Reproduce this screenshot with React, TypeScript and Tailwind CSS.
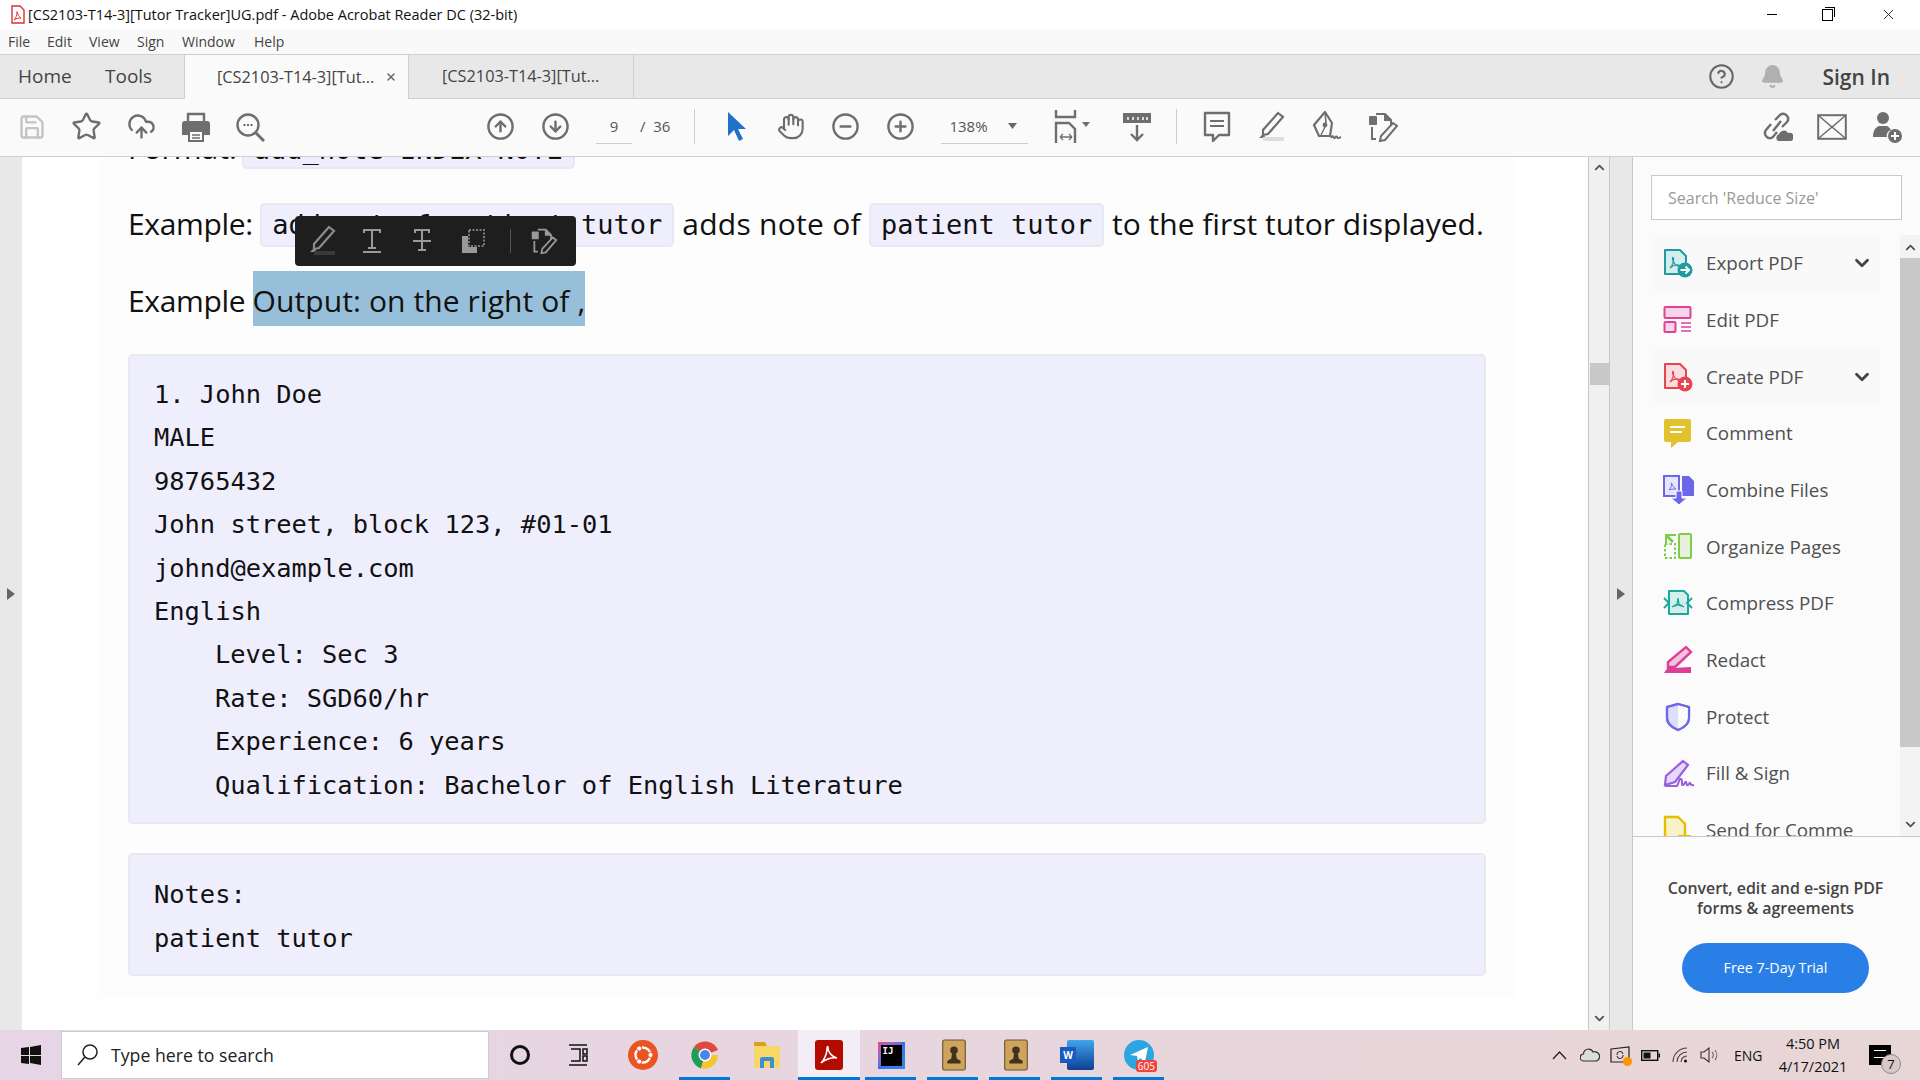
import {
  Bell,
  ChevronDown,
  ChevronUp,
  CircleArrowDown,
  CircleArrowUp,
  CircleHelp,
  CircleMinus,
  CirclePlus,
  CloudUpload,
  Hand,
  Save,
  Star,
  X,
} from "lucide-react";
import type { ReactNode } from "react";

const sans = "font-['Open_Sans','Noto_Sans',sans-serif]";
const mono = "font-['DejaVu_Sans_Mono',monospace]";

// little acrobat swirl used inside the pdf icons
function Swirl({ color }: { color: string }) {
  return (
    <path
      d="M7 20c2-2 3.500-6 3.500-9 0-2-.5-2-1-1-.4 1 1 4 2.500 6 1 1.500 3 2.500 4 2 .8-.5-1-1.500-3-1.200-2 .3-5 2-6 3.200z"
      fill="none"
      stroke={color}
      strokeWidth="1.200"
    />
  );
}

function PdfIcon({ color, fill, badge }: { color: string; fill: string; badge: "arrow" | "plus" }) {
  return (
    <svg width="30" height="30" viewBox="0 0 30 30">
      <path d="M2 2h15l6 6v18H2z" fill={fill} stroke={color} strokeWidth="2" strokeLinejoin="round" />
      <Swirl color={color} />
      <circle cx="22" cy="22" r="7.500" fill={color} />
      {badge === "arrow" ? (
        <path d="M17.500 22h8M22.500 18.500l3.500 3.500-3.500 3.500" stroke="#fff" strokeWidth="2" fill="none" />
      ) : (
        <path d="M18 22h8M22 18v8" stroke="#fff" strokeWidth="2.200" fill="none" />
      )}
    </svg>
  );
}

function EditIcon() {
  return (
    <svg width="30" height="30" viewBox="0 0 30 30">
      <rect x="1.500" y="2" width="26" height="11" rx="1" fill="#f6d5e8" stroke="#e0409a" strokeWidth="2" />
      <rect x="1.500" y="17" width="11" height="10" rx="1" fill="#f6d5e8" stroke="#e0409a" strokeWidth="2" />
      <path d="M18 18h10M18 22h10M18 26h10" stroke="#e0409a" strokeWidth="1.500" />
    </svg>
  );
}

function CommentIcon() {
  return (
    <svg width="30" height="30" viewBox="0 0 30 30">
      <path d="M3 1h23a2 2 0 0 1 2 2v19a2 2 0 0 1-2 2H15l-7 6v-6H3a2 2 0 0 1-2-2V3a2 2 0 0 1 2-2z" fill="#e2c22c" />
      <path d="M7 9h15M7 14h12" stroke="#fff" strokeWidth="2.200" />
    </svg>
  );
}

function CombineIcon() {
  return (
    <svg width="32" height="32" viewBox="0 0 32 32">
      <path d="M1 2h15v20H1z" fill="#e6e6fb" stroke="#6a68e8" strokeWidth="2" />
      <path d="M19 2h7l5 5v15H19z" fill="#6a68e8" />
      <path d="M6 16c2-2 3-5 2.500-7-.5-1 2 5 4.500 6-2 0-5 0-7 1z" fill="none" stroke="#6a68e8" />
      <path d="M13 17h6v7h5l-8 7-8-7h5z" fill="#6a68e8" stroke="#fff" />
    </svg>
  );
}

function OrganizeIcon() {
  return (
    <svg width="30" height="30" viewBox="0 0 30 30">
      <rect x="16" y="2" width="12" height="24" rx="1" fill="#e6f2dc" stroke="#7fcb4a" strokeWidth="2" />
      <rect x="2" y="12" width="10" height="14" fill="none" stroke="#7fcb4a" strokeWidth="2" strokeDasharray="2.500 2" />
      <path d="M13 2v2H6l5 5-2 2-5-5v6H2V2z" fill="#7fcb4a" />
    </svg>
  );
}

function CompressIcon() {
  return (
    <svg width="30" height="30" viewBox="0 0 30 30">
      <path d="M6 3h15l4 4v19H6z" fill="#d3efec" stroke="#1ea7a0" strokeWidth="2" strokeLinejoin="round" />
      <path d="M1 10l5 5-5 5M29 10l-5 5 5 5" fill="none" stroke="#1ea7a0" strokeWidth="2" />
      <path d="M9 19l5-3 1-6 1 6 5 3-6-2z" fill="none" stroke="#1ea7a0" strokeWidth="1.300" />
    </svg>
  );
}

function RedactIcon() {
  return (
    <svg width="30" height="30" viewBox="0 0 30 30">
      <path d="M23 2l5 5-16 15H5v-5z" fill="#f2c3dc" stroke="#de3e96" strokeWidth="2.400" />
      <path d="M1 28l4-6 5 1 18-1v6z" fill="#de3e96" />
    </svg>
  );
}

function ProtectIcon() {
  return (
    <svg width="30" height="30" viewBox="0 0 30 30">
      <path d="M15 2l11 3v11c0 6-6 10-11 12C10 26 4 22 4 16V5z" fill="#dedefb" stroke="#6a68e8" strokeWidth="2.200" />
      <path d="M15 3v24C20 25 25 21 25 16V6z" fill="#fbfbfb" />
      <path d="M15 2l11 3v11c0 6-6 10-11 12C10 26 4 22 4 16V5z" fill="none" stroke="#6a68e8" strokeWidth="2.200" />
    </svg>
  );
}

function FillSignIcon() {
  return (
    <svg width="32" height="30" viewBox="0 0 32 30">
      <path d="M20 2l5 4-13 17-10 3 1-9z" fill="#e6d8f8" stroke="#9a5fe0" strokeWidth="2.200" />
      <path d="M2 27h12c2-3 2-8 4-7s0 7 2 6 2-4 3-3 0 4 2 3 1-3 2-2 1 3 4 2" fill="none" stroke="#9a5fe0" strokeWidth="2" />
    </svg>
  );
}

function SendIcon() {
  return (
    <svg width="30" height="30" viewBox="0 0 30 30">
      <path d="M2 2h13l7 7v19H2z" fill="#f8f2c8" stroke="#e2c000" strokeWidth="2.400" />
      <rect x="15" y="20" width="13" height="9" fill="#e2c000" />
    </svg>
  );
}

// the "edit doc" icon shows up in the toolbar and in the popup
function DocEdit({ color, size = 32 }: { color: string; size?: number }) {
  return (
    <svg width={size} height={size} viewBox="0 0 32 32">
      <rect x="2" y="5" width="8" height="9" rx="1" fill={color} />
      <path d="M9 3h9l6 6v5M9 28H5V16" fill="none" stroke={color} strokeWidth="2" />
      <path d="M18 3v6h6" fill={color} stroke={color} strokeWidth="2" />
      <path d="M26 12l4 3-12 14-5 1 1-5z" fill="none" stroke={color} strokeWidth="2" />
    </svg>
  );
}

function Highlight({ color, bar }: { color: string; bar: string }) {
  return (
    <svg width="32" height="32" viewBox="0 0 32 32">
      <path d="M23 2l5 4-15 17-5 1v-5z" fill="none" stroke={color} strokeWidth="2.200" />
      <path d="M8 23l-4 4h7z" fill={color} />
      <rect x="8" y="26" width="21" height="4" fill={bar} />
    </svg>
  );
}

function PrinterIcon() {
  return (
    <svg width="28" height="30" viewBox="0 0 28 30">
      <path d="M6 9V2h16v7" fill="none" stroke="#6e6e6e" strokeWidth="2.400" />
      <path d="M3 9h22a3 3 0 0 1 3 3v11h-6v-5H6v5H0V12a3 3 0 0 1 3-3z" fill="#6e6e6e" />
      <rect x="7" y="19" width="14" height="10" fill="#fafafa" stroke="#6e6e6e" strokeWidth="2" />
      <path d="M10 23h8M10 26h8" stroke="#6e6e6e" strokeWidth="1.500" />
    </svg>
  );
}

function FitWidth() {
  return (
    <svg width="38" height="34" viewBox="0 0 38 34">
      <path d="M3 0v7h19V0" fill="none" stroke="#6e6e6e" strokeWidth="2.400" />
      <path d="M3 33V13h13l6 6v14" fill="none" stroke="#6e6e6e" strokeWidth="2.400" />
      <path d="M7 27h12M7 27l3-3M7 27l3 3M19 27l-3-3M19 27l-3 3" stroke="#6e6e6e" strokeWidth="1.300" />
      <path d="M29 12h8l-4 5z" fill="#6e6e6e" />
    </svg>
  );
}

function RulerDown() {
  return (
    <svg width="30" height="30" viewBox="0 0 30 30">
      <rect x="1" y="1" width="28" height="10" fill="#6e6e6e" />
      <path d="M6 5v3M11 5v3M16 5v3M21 5v3M25 5v3" stroke="#fff" strokeWidth="1.500" />
      <path d="M15 13v15M9 22l6 6 6-6" fill="none" stroke="#6e6e6e" strokeWidth="2.400" />
    </svg>
  );
}

function CommentOutline() {
  return (
    <svg width="28" height="32" viewBox="0 0 28 32">
      <path d="M2 2h24v22H16l-6 6v-6H2z" fill="#fafafa" stroke="#6e6e6e" strokeWidth="2.400" strokeLinejoin="round" />
      <path d="M7 10h14M7 15h14" stroke="#6e6e6e" strokeWidth="2" />
    </svg>
  );
}

function PenSign() {
  return (
    <svg width="32" height="32" viewBox="0 0 32 32">
      <path d="M14 1l7 11-2 13H8L3 14z" fill="none" stroke="#6e6e6e" strokeWidth="2.200" strokeLinejoin="round" />
      <path d="M14 1l1 11" stroke="#6e6e6e" strokeWidth="1.600" />
      <circle cx="14" cy="14" r="2.400" fill="#6e6e6e" />
      <path d="M14 16l-4 8" stroke="#6e6e6e" strokeWidth="1.400" />
      <path d="M20 27c2-4 2-1 3 0s2-3 3-1 2 1 4 0" fill="none" stroke="#6e6e6e" strokeWidth="2" />
    </svg>
  );
}

function LinkCloud() {
  return (
    <svg width="32" height="32" viewBox="0 0 32 32">
      <path d="M12 20l8-10M10 13l-5 6a5 5 0 0 0 7 7l4-5M14 9l5-5a5 5 0 0 1 7 7l-5 5" fill="none" stroke="#6e6e6e" strokeWidth="2.400" />
      <path d="M17 30a4 4 0 0 1 1-7 5 5 0 0 1 9-1 4 4 0 0 1 3 8z" fill="#6e6e6e" />
    </svg>
  );
}

function MailBox() {
  return (
    <svg width="30" height="26" viewBox="0 0 30 26">
      <rect x="1.200" y="1.200" width="27.600" height="23.600" fill="none" stroke="#6e6e6e" strokeWidth="2" />
      <path d="M2 2l13 11L28 2M2 24l13-11 13 11" fill="none" stroke="#6e6e6e" strokeWidth="1.500" />
    </svg>
  );
}

function UserAdd() {
  return (
    <svg width="32" height="32" viewBox="0 0 32 32">
      <circle cx="12" cy="7" r="6" fill="#6e6e6e" />
      <path d="M2 26c0-7 3-10 6-11h8c2 1 3 2 4 4-3 1-5 4-4 7z" fill="#6e6e6e" />
      <circle cx="24" cy="25" r="7" fill="#6e6e6e" />
      <path d="M20 25h8M24 21v8" stroke="#fafafa" strokeWidth="2" />
    </svg>
  );
}

function Tile({ children, bar, active }: { children: ReactNode; bar?: boolean; active?: boolean }) {
  return (
    <div className={`relative h-full w-[62px] shrink-0 flex items-center justify-center ${active ? "bg-[#f3edf5]" : ""}`}>
      {children}
      {bar && <div className={`absolute bottom-0 h-[3px] bg-[#0078d7] ${active ? "inset-x-0" : "left-[5px] right-[6px]"}`} />}
    </div>
  );
}

function ContactIcon() {
  return (
    <svg width="26" height="32" viewBox="0 0 26 34" className="ml-[2px]">
      <rect x="1" y="1" width="24" height="32" rx="2" fill="#cfa35c" stroke="#6b5330" strokeWidth="1.200" />
      <circle cx="13" cy="12" r="4" fill="#3f3220" />
      <path d="M11 15h4l1 6 4 2v3H6v-3l4-2z" fill="#3f3220" />
    </svg>
  );
}

const tools: { label: string; icon: ReactNode; more?: boolean }[] = [
  { label: "Export PDF", icon: <PdfIcon color="#1f9aa0" fill="#d3eced" badge="arrow" />, more: true },
  { label: "Edit PDF", icon: <EditIcon /> },
  { label: "Create PDF", icon: <PdfIcon color="#e8434f" fill="#fbdcdf" badge="plus" />, more: true },
  { label: "Comment", icon: <CommentIcon /> },
  { label: "Combine Files", icon: <CombineIcon /> },
  { label: "Organize Pages", icon: <OrganizeIcon /> },
  { label: "Compress PDF", icon: <CompressIcon /> },
  { label: "Redact", icon: <RedactIcon /> },
  { label: "Protect", icon: <ProtectIcon /> },
  { label: "Fill & Sign", icon: <FillSignIcon /> },
  { label: "Send for Comme", icon: <SendIcon /> },
];

const card = "rounded-[5px] border-2 border-[#e8e8f0] bg-[#efeefd]";
const chip = `${card} ${mono} h-[44px] flex items-center px-[10px] text-[27px] text-[#111] whitespace-pre`;

const personLines = ["1. John Doe", "MALE", "98765432", "John street, block 123, #01-01", "johnd@example.com", "English"];
const detailLines = ["Level: Sec 3", "Rate: SGD60/hr", "Experience: 6 years", "Qualification: Bachelor of English Literature"];

export default function App() {
  const ic = { size: 29, color: "#6e6e6e", strokeWidth: 2 };
  return (
    <div className={`h-[1080px] w-[1920px] overflow-hidden flex flex-col bg-white ${sans}`}>
      {/* title bar */}
      <div className="h-[29px] shrink-0 flex items-center pl-[11px] bg-white">
        <svg width="14" height="19" viewBox="0 0 14 19">
          <path d="M1 1h8l4 4v13H1z" fill="#fff" stroke="#d9342b" strokeWidth="1.400" />
          <path d="M3 15c2-2 3-5 3-8 0-2 .5 4 4 6-3 0-5 .5-7 2z" fill="none" stroke="#d9342b" />
        </svg>
        <span className="ml-[3px] text-[14.500px] text-[#111] whitespace-pre">[CS2103-T14-3][Tutor Tracker]UG.pdf - Adobe Acrobat Reader DC (32-bit)</span>
        <div className="ml-auto flex items-center">
          <div className="w-[10px] h-px bg-black mr-[45px]" />
          <div className="relative w-[11px] h-[12px] mr-[47px] border border-black">
            <div className="absolute -top-[3px] left-[2px] w-[10px] h-[10px] border-t border-r border-black" />
          </div>
          <X size={17} strokeWidth={1.200} color="#111" className="mr-[23px]" />
        </div>
      </div>

      {/* menu */}
      <div className="h-[26px] shrink-0 flex items-center bg-[#f9f9f9] border-b border-[#cfcfcf] text-[14px] text-[#444]">
        <span className="ml-[8px] w-[39px]">File</span>
        <span className="w-[42px]">Edit</span>
        <span className="w-[48px]">View</span>
        <span className="w-[45px]">Sign</span>
        <span className="w-[72px]">Window</span>
        <span>Help</span>
      </div>

      {/* tabs */}
      <div className="h-[44px] shrink-0 flex bg-[#e8e8e8] border-b border-[#cfcfcf] text-[#444]">
        <div className="w-[184px] flex items-center text-[19px]">
          <span className="ml-[18px] w-[87px]">Home</span>
          <span>Tools</span>
        </div>
        <div className="w-[225px] h-[44px] bg-[#fafafa] border-x border-[#cfcfcf] flex items-center pl-[32px] text-[16.300px]">
          <span>[CS2103-T14-3][Tut...</span>
          <X size={12} strokeWidth={3} color="#666" className="ml-[11px]" />
        </div>
        <div className="w-[225px] border-r border-[#cfcfcf] flex items-center pl-[33px] text-[16.300px]">[CS2103-T14-3][Tut...</div>
        <div className="ml-auto flex items-center">
          <CircleHelp size={27} color="#666" strokeWidth={1.800} className="mr-[25px]" />
          <Bell size={25} color="#b0b0b0" fill="#b0b0b0" className="mr-[37px]" />
          <span className="mr-[30px] pt-[2px] text-[21px] font-semibold text-[#444]">Sign In</span>
        </div>
      </div>

      {/* toolbar */}
      <div className="h-[58px] shrink-0 flex items-center bg-[#fafafa] border-b border-[#cfcfcf] pl-[4px] pb-[2px]">
        <div className="w-[55px] flex justify-center"><Save size={28} color="#c4c4c4" strokeWidth={2} /></div>
        <div className="w-[55px] flex justify-center"><Star size={31} color="#6e6e6e" strokeWidth={1.800} /></div>
        <div className="w-[55px] flex justify-center"><CloudUpload {...ic} /></div>
        <div className="w-[53px] flex justify-center"><PrinterIcon /></div>
        <div className="w-[55px] flex justify-center">
          <svg width="30" height="30" viewBox="0 0 30 30">
            <circle cx="13" cy="13" r="10.500" fill="none" stroke="#6e6e6e" strokeWidth="2.400" />
            <path d="M21 21l8 8" stroke="#6e6e6e" strokeWidth="3" />
            <path d="M8.500 13h2M12 13h2M15.500 13h2" stroke="#6e6e6e" strokeWidth="2" />
          </svg>
        </div>
        <div className="ml-[196px] w-[55px] flex justify-center"><CircleArrowUp {...ic} /></div>
        <div className="w-[55px] flex justify-center"><CircleArrowDown {...ic} /></div>
        <div className="ml-[13px] w-[36px] h-[35px] flex items-center justify-center border-b border-[#ccc] text-[15px] text-[#555]">9</div>
        <span className="ml-[8px] text-[15px] text-[#555] whitespace-pre">/  36</span>
        <div className="ml-[24px] w-px h-[35px] bg-[#ccc]" />
        <div className="ml-[27px] w-[28px] flex justify-center">
          <svg width="22" height="32" viewBox="0 0 22 32">
            <path d="M3 1v24l6-6 5 11 4-2-5-10h8z" fill="#1f72c8" />
          </svg>
        </div>
        <div className="ml-[27px] w-[28px] flex justify-center"><Hand size={31} color="#6e6e6e" strokeWidth={1.800} /></div>
        <div className="ml-[26px] w-[29px]"><CircleMinus {...ic} /></div>
        <div className="ml-[26px] w-[29px]"><CirclePlus {...ic} /></div>
        <div className="ml-[26px] w-[87px] h-[35px] flex items-center border-b border-[#ccc] pl-[8px] text-[15px] text-[#555]">
          138%
          <svg width="9" height="6" viewBox="0 0 9 6" className="ml-auto mr-[11px]"><path d="M0 0h9L4.500 6z" fill="#666" /></svg>
        </div>
        <div className="ml-[25px] w-[38px]"><FitWidth /></div>
        <div className="ml-[31px] w-[30px]"><RulerDown /></div>
        <div className="ml-[24px] w-px h-[35px] bg-[#ccc]" />
        <div className="ml-[26px] w-[28px]"><CommentOutline /></div>
        <div className="ml-[24px] w-[32px]"><Highlight color="#6e6e6e" bar="#dedede" /></div>
        <div className="ml-[24px] w-[32px]"><PenSign /></div>
        <div className="ml-[24px] w-[32px]"><DocEdit color="#6e6e6e" /></div>
        <div className="ml-auto flex items-center gap-[24px] pr-[17px]">
          <LinkCloud />
          <MailBox />
          <UserAdd />
        </div>
      </div>

      {/* main area */}
      <div className="flex-1 min-h-0 flex">
        <div className="w-[22px] shrink-0 bg-[#e8e8e8] flex items-center pl-[7px]">
          <svg width="8" height="12" viewBox="0 0 8 12"><path d="M0 0l8 6-8 6z" fill="#666" /></svg>
        </div>

        {/* page */}
        <div className="relative w-[1566px] shrink-0 overflow-hidden bg-white pl-[76px] pr-[73px]">
          <div className="h-full bg-[#fdfdfd] pl-[30px] pr-[29px] text-[30px] text-[#111]">
            <div className="-mt-[32px] flex h-[44px] items-center">
              <span>Format:</span>
              <div className={`${chip} ml-[5px] pt-[6px]`}>add_note INDEX NOTE</div>
            </div>
            <div className="mt-[34px] flex h-[44px] items-center whitespace-pre">
              <span className="pb-[4px] tracking-[-0.350px]">Example: </span>
              <div className={chip}>add_note 1 patient tutor</div>
              <span className="pb-[4px] tracking-[0.260px]"> adds note of </span>
              <div className={chip}>patient tutor</div>
              <span className="pb-[4px]"> to the first tutor displayed.</span>
            </div>
            <div className="mt-[24px] flex h-[55px] items-center whitespace-pre">
              <span className="h-full flex items-center pt-[4px] tracking-[-0.350px]">Example </span>
              <span className="flex h-full items-center bg-[#98bfd9] pt-[4px] tracking-[0.100px]">Output: on the right of ,</span>
            </div>
            <div className={`${card} ${mono} mt-[28px] h-[470px] pt-[17px] pl-[24px] text-[25.400px] leading-[43.400px]`}>
              {personLines.map((line) => (
                <div key={line}>{line}</div>
              ))}
              {detailLines.map((line) => (
                <div key={line} className="pl-[61px]">{line}</div>
              ))}
            </div>
            <div className={`${card} ${mono} mt-[29px] h-[123px] pt-[17px] pl-[24px] text-[25.400px] leading-[44px]`}>
              <div>Notes:</div>
              <div>patient tutor</div>
            </div>
          </div>

          {/* popup over the selected text */}
          <div className="absolute left-[273px] top-[59px] h-[50px] w-[281px] rounded-[4px] bg-[#1e1e1e] flex items-center pl-[11px]">
            <Highlight color="#8c8c8c" bar="#3a3a3a" />
            <svg width="20" height="26" viewBox="0 0 20 26" className="ml-[24px]">
              <path d="M2 5V2h16v3M10 2v18M6 20h8M1 24h18" fill="none" stroke="#999" strokeWidth="2" />
            </svg>
            <svg width="20" height="26" viewBox="0 0 20 26" className="ml-[30px]">
              <path d="M3 5V2h14v3M10 2v20M6 22h8M1 13h18" fill="none" stroke="#999" strokeWidth="2" />
            </svg>
            <svg width="24" height="26" viewBox="0 0 24 26" className="ml-[29px]">
              <rect x="8" y="2" width="15" height="16" fill="none" stroke="#999" strokeWidth="1.500" strokeDasharray="2 1.500" />
              <path d="M1 8h6v11h9v6H1z" fill="#999" />
            </svg>
            <div className="ml-[25px] h-[24px] w-px bg-[#555]" />
            <div className="ml-[19px]"><DocEdit color="#999" size={28} /></div>
          </div>
        </div>

        {/* doc scrollbar */}
        <div className="w-[22px] shrink-0 bg-[#f0f0f0] border-x border-[#c8c8c8] flex flex-col items-center">
          <ChevronUp size={15} color="#555" strokeWidth={3} className="mt-[3px]" />
          <div className="mt-[188px] w-[19px] h-[22px] bg-[#c8c8c8]" />
          <ChevronDown size={15} color="#555" strokeWidth={3} className="mt-auto mb-[4px]" />
        </div>

        {/* collapse strip */}
        <div className="w-[23px] shrink-0 bg-[#e8e8e8] border-r border-[#c8c8c8] flex items-center justify-center">
          <svg width="8" height="12" viewBox="0 0 8 12"><path d="M0 0l8 6-8 6z" fill="#666" /></svg>
        </div>

        {/* tools pane */}
        <div className="flex-1 min-w-0 flex flex-col bg-[#fbfbfb]">
          <div className="h-[78px] shrink-0 pt-[18px] pl-[18px] pr-[18px]">
            <div className="h-[45px] bg-white border border-[#c8c8c8] flex items-center pl-[16px] text-[16px] text-[#999]">Search 'Reduce Size'</div>
          </div>
          <div className="flex-1 min-h-0 flex overflow-hidden">
            <div className="flex-1 min-w-0 pl-[18px]">
              {tools.map((tool) => (
                <div key={tool.label} className={`h-[56.700px] flex items-center pl-[12px] ${tool.more ? "bg-[#f9f9f9] mr-[20px]" : ""}`}>
                  <div className="w-[43px] shrink-0">{tool.icon}</div>
                  <span className="text-[18.800px] text-[#505050] whitespace-nowrap">{tool.label}</span>
                  {tool.more && <ChevronDown size={22} color="#444" strokeWidth={3} className="ml-auto mr-[7px]" />}
                </div>
              ))}
            </div>
            <div className="w-[20px] shrink-0 bg-[#f3f3f3] flex flex-col items-center pt-[2px]">
              <div className="h-[21px] flex items-center"><ChevronUp size={15} color="#555" strokeWidth={3} /></div>
              <div className="w-full h-[489px] bg-[#c8c8c8]" />
              <ChevronDown size={15} color="#555" strokeWidth={3} className="mt-auto mb-[4px]" />
            </div>
          </div>
          <div className="h-[194px] shrink-0 border-t border-[#c8c8c8] flex flex-col items-center pt-[41px] pr-[2px]">
            <div className="text-center text-[15.900px] font-semibold leading-[20px] text-[#444]">
              Convert, edit and e-sign PDF
              <br />
              forms &amp; agreements
            </div>
            <div className="mt-[25px] w-[187px] h-[50px] rounded-full bg-[#2a7fe6] flex items-center justify-center text-[14.300px] text-white">Free 7-Day Trial</div>
          </div>
        </div>
      </div>

      {/* taskbar */}
      <div className="h-[50px] shrink-0 flex items-center bg-gradient-to-r from-[#e6d5e6] to-[#e8d6d6] text-[#111]">
        <div className="w-[61px] shrink-0 flex justify-center">
          <svg width="20" height="20" viewBox="0 0 20 20">
            <path d="M0 3l8-1v8H0zM9 2l11-2v10H9zM0 11h8v8l-8-1zM9 11h11v9L9 18z" fill="#111" />
          </svg>
        </div>
        <div className="w-[428px] h-[48px] shrink-0 bg-white border border-[#ccc] flex items-center pl-[14px]">
          <svg width="22" height="24" viewBox="0 0 22 24">
            <circle cx="14" cy="9" r="7" fill="none" stroke="#222" strokeWidth="1.500" />
            <path d="M9 14L2 22" stroke="#222" strokeWidth="1.500" />
          </svg>
          <span className="ml-[13px] text-[17.700px] text-[#222]">Type here to search</span>
        </div>
        <div className="w-[62px] flex justify-center">
          <div className="w-[20px] h-[20px] rounded-full border-[3px] border-[#111]" />
        </div>
        <div className="w-[61px] flex justify-center pr-[7px]">
          <svg width="20" height="22" viewBox="0 0 20 22">
            <path d="M1 1h18M1 21h18M3 5h9v12H3M15 5h4v5h-4zM15 12h4v5h-4z" fill="none" stroke="#111" strokeWidth="1.500" />
          </svg>
        </div>
        <Tile>
          <svg width="30" height="30" viewBox="0 0 30 30">
            <circle cx="15" cy="15" r="15" fill="#e95420" />
            <circle cx="15" cy="15" r="7.500" fill="none" stroke="#fff" strokeWidth="2.400" />
            <circle cx="22.500" cy="15" r="2.600" fill="#fff" stroke="#e95420" />
            <circle cx="11.200" cy="8.500" r="2.600" fill="#fff" stroke="#e95420" />
            <circle cx="11.200" cy="21.500" r="2.600" fill="#fff" stroke="#e95420" />
          </svg>
        </Tile>
        <Tile bar>
          <svg width="28" height="28" viewBox="0 0 28 28">
            <path d="M14 14L3 6a14 14 0 0 1 24 3z" fill="#dd4b3e" />
            <path d="M14 14L3 6a14 14 0 0 0 7 21.500z" fill="#1f9d55" />
            <path d="M14 14h13a14 14 0 0 1-17 13.500z" fill="#f6c42f" />
            <circle cx="14" cy="14" r="6.500" fill="#fff" />
            <circle cx="14" cy="14" r="5" fill="#4a85ed" />
          </svg>
        </Tile>
        <Tile>
          <svg width="28" height="26" viewBox="0 0 28 26">
            <path d="M1 0h11l2 4H1z" fill="#d9a21b" />
            <rect x="1" y="4" width="26" height="22" fill="#f7d767" />
            <path d="M7 26v-9a2 2 0 0 1 2-2h10a2 2 0 0 1 2 2v9h-4v-7h-6v7z" fill="#3d8fd1" />
          </svg>
        </Tile>
        <Tile bar active>
          <div className="w-[28px] h-[30px] rounded-[3px] bg-[#b30b00] flex items-center justify-center">
            <svg width="20" height="20" viewBox="0 0 20 20">
              <path d="M2 18c3-3 6-9 6-14 0-3 1-3 1-1 0 4 4 9 9 10-4-1-12 1-16 5z" fill="none" stroke="#fff" strokeWidth="1.600" />
            </svg>
          </div>
        </Tile>
        <Tile bar>
          <div className="w-[27px] h-[27px] bg-gradient-to-br from-[#e83e8c] via-[#3a6fe8] to-[#2a8fe8] p-[3px]">
            <div className={`w-full h-full bg-black text-white ${mono} text-[9px] font-bold leading-[10px] pl-[2px] pt-px`}>IJ</div>
          </div>
        </Tile>
        <Tile bar><ContactIcon /></Tile>
        <Tile bar><ContactIcon /></Tile>
        <Tile bar>
          <div className="relative ml-[7px] w-[27px] h-[30px] bg-gradient-to-b from-[#41a5ee] to-[#103f91] rounded-[2px]">
            <div className="absolute -left-[7px] top-[7px] w-[16px] h-[16px] bg-[#185abd] text-white text-[10px] font-bold flex items-center justify-center">W</div>
          </div>
        </Tile>
        <Tile bar>
          <div className="relative w-[30px] h-[30px] rounded-full bg-[#2ca5e0] flex items-center justify-center">
            <svg width="18" height="16" viewBox="0 0 18 16"><path d="M0 8L18 0l-3 15-5-4-2 3-1-5z" fill="#fff" /></svg>
            <div className="absolute -bottom-[2px] -right-[3px] rounded-[3px] bg-[#f0433a] px-[2px] text-[10px] leading-[12px] text-white">605</div>
          </div>
        </Tile>

        {/* tray */}
        <div className="ml-auto flex items-center">
          <svg width="15" height="9" viewBox="0 0 15 9" className="mr-[13px]"><path d="M1 8l6.500-7L14 8" fill="none" stroke="#222" strokeWidth="1.300" /></svg>
          <svg width="20" height="14" viewBox="0 0 20 14" className="mr-[10px]">
            <path d="M4 13a3.500 3.500 0 0 1-.5-7A5 5 0 0 1 13 4a4 4 0 0 1 3.500 9z" fill="#ddd" stroke="#333" strokeWidth="1.200" />
          </svg>
          <div className="relative mr-[11px]">
            <svg width="20" height="18" viewBox="0 0 20 18">
              <path d="M1 3l18-2v15H1z" fill="none" stroke="#222" strokeWidth="1.200" />
              <path d="M7 9a3 3 0 0 1 6-1M13 9a3 3 0 0 1-6 1" fill="none" stroke="#222" />
            </svg>
            <div className="absolute -bottom-[2px] -right-[2px] w-[9px] h-[9px] rounded-full bg-[#ff9500]" />
          </div>
          <svg width="19" height="11" viewBox="0 0 19 11" className="mr-[12px]">
            <rect x=".7" y=".7" width="16" height="9.600" fill="none" stroke="#111" strokeWidth="1.400" />
            <rect x="2.500" y="2.500" width="7" height="6" fill="#111" />
            <rect x="17.500" y="3.500" width="1.500" height="4" fill="#111" />
          </svg>
          <svg width="16" height="16" viewBox="0 0 16 16" className="mr-[12px]">
            <path d="M1 15A14 14 0 0 1 15 1M5 15A10 10 0 0 1 15 5M9 15a6 6 0 0 1 6-6" fill="none" stroke="#444" strokeWidth="1.100" />
            <circle cx="13.500" cy="14" r="1.500" fill="#111" />
          </svg>
          <svg width="20" height="16" viewBox="0 0 20 16" className="mr-[14px]">
            <path d="M1 5h3l5-4v14l-5-4H1z" fill="none" stroke="#333" strokeWidth="1.100" />
            <path d="M12 5a4 4 0 0 1 0 6M15 3a8 8 0 0 1 0 10" fill="none" stroke="#666" strokeWidth="1.100" />
          </svg>
          <span className="w-[38px] text-[14px]">ENG</span>
          <div className="ml-px w-[80px] text-center text-[14.500px] leading-[23px]">
            <div>4:50 PM</div>
            <div>4/17/2021</div>
          </div>
          <div className="relative ml-[16px] mr-[29px] w-[22px] h-[20px] bg-black">
            <div className="absolute left-[5px] top-[5px] w-[12px] h-[8px] border-y border-white" />
            <div className="absolute -bottom-[9px] -right-[10px] w-[20px] h-[20px] rounded-full bg-[#d8c8c8] border border-[#888] flex items-center justify-center text-[13px] leading-none">7</div>
          </div>
        </div>
      </div>
    </div>
  );
}
